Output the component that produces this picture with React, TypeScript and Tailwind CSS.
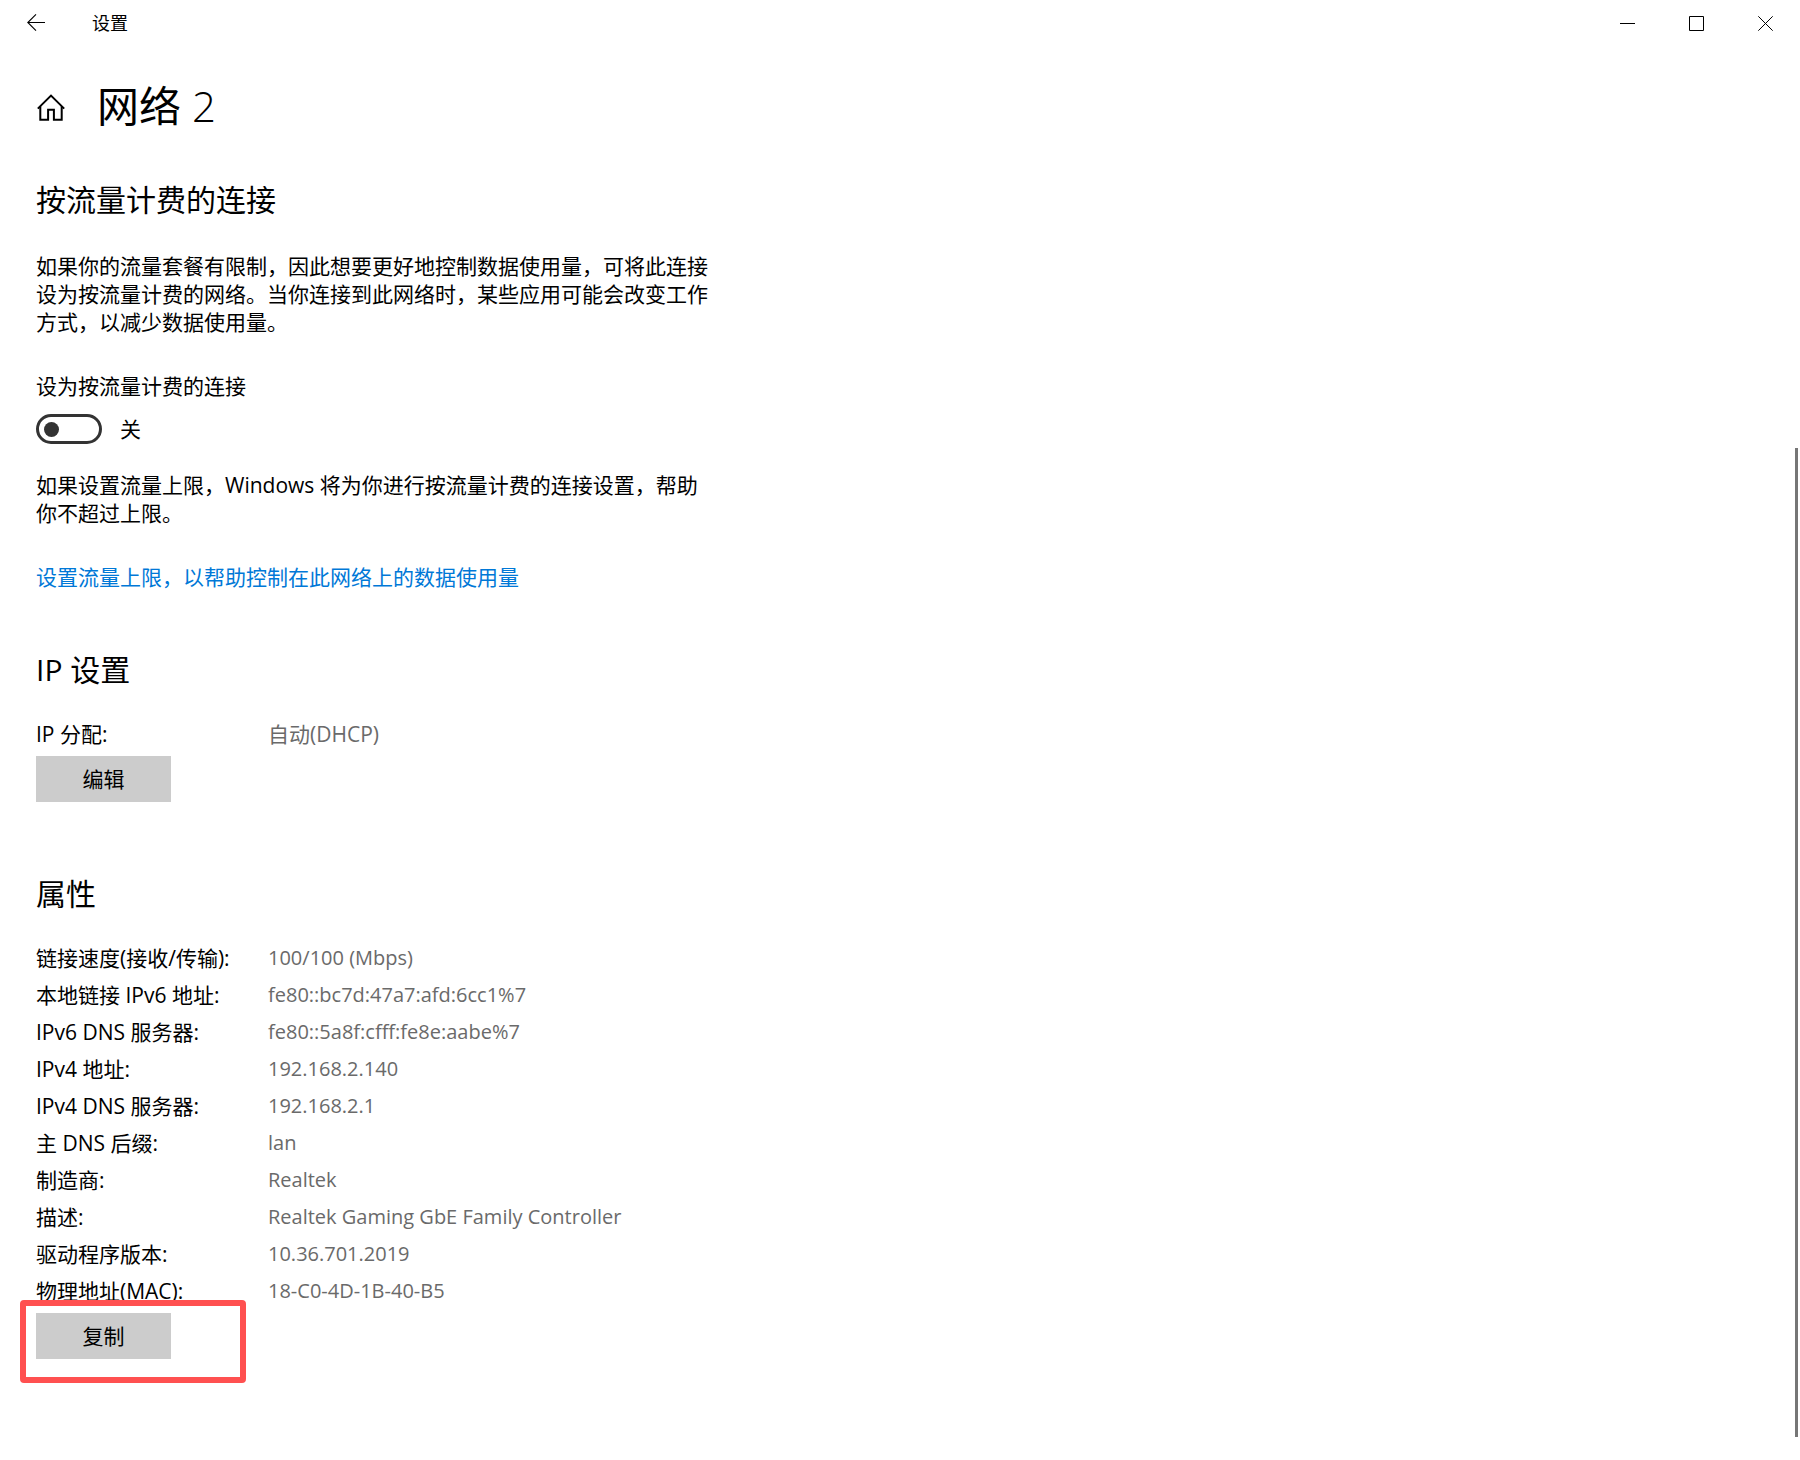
import { useState } from "react";
import type { ReactNode } from "react";

interface PropertyRow {
  label: string;
  value: string;
}

const IP_ROWS: PropertyRow[] = [{ label: "IP 分配:", value: "自动(DHCP)" }];

const PROPERTY_ROWS: PropertyRow[] = [
  { label: "链接速度(接收/传输):", value: "100/100 (Mbps)" },
  { label: "本地链接 IPv6 地址:", value: "fe80::bc7d:47a7:afd:6cc1%7" },
  { label: "IPv6 DNS 服务器:", value: "fe80::5a8f:cfff:fe8e:aabe%7" },
  { label: "IPv4 地址:", value: "192.168.2.140" },
  { label: "IPv4 DNS 服务器:", value: "192.168.2.1" },
  { label: "主 DNS 后缀:", value: "lan" },
  { label: "制造商:", value: "Realtek" },
  { label: "描述:", value: "Realtek Gaming GbE Family Controller" },
  { label: "驱动程序版本:", value: "10.36.701.2019" },
  { label: "物理地址(MAC):", value: "18-C0-4D-1B-40-B5" },
];

function WindowButton({
  label,
  children,
}: {
  label: string;
  children: ReactNode;
}) {
  return (
    <button
      aria-label={label}
      className="flex h-[46px] w-[69px] items-center justify-center hover:bg-gray-200"
      type="button"
    >
      <svg
        className="h-[15px] w-[15px]"
        fill="none"
        stroke="#000"
        strokeWidth="1"
        viewBox="0 0 15 15"
      >
        {children}
      </svg>
    </button>
  );
}

function TitleBar() {
  return (
    <header className="flex h-[46px] items-center">
      <button
        aria-label="返回"
        className="flex h-[46px] w-[72px] items-center justify-center"
        type="button"
      >
        <svg
          className="h-[18px] w-[18px]"
          fill="none"
          stroke="#000"
          strokeWidth="1.1"
          viewBox="0 0 18 18"
        >
          <path d="M18 8.5H.8M9 .4.8 8.5 9 16.7" />
        </svg>
      </button>
      <span className="flex-1 pl-5 text-lg leading-6">设置</span>
      <WindowButton label="最小化">
        <path d="M0 7.5h15" />
      </WindowButton>
      <WindowButton label="最大化">
        <path d="M.5.5h14v14H.5z" />
      </WindowButton>
      <WindowButton label="关闭">
        <path d="M.3.3l14.4 14.4M14.7.3.3 14.7" />
      </WindowButton>
    </header>
  );
}

function HomeIcon() {
  return (
    <svg
      className="h-[31px] w-[29px]"
      fill="none"
      stroke="#000"
      strokeWidth="2"
      viewBox="-1 -3 29 31"
    >
      <path d="M.8 14.6 14 1.6l13.2 13" />
      <path d="M3.3 12.2v13.5h7.8v-9.9h5.8v9.9h7.8V12.2" />
    </svg>
  );
}

function SectionTitle({ children }: { children: ReactNode }) {
  return <h2 className="text-3xl leading-10">{children}</h2>;
}

function ActionButton({ children }: { children: ReactNode }) {
  return (
    <button
      className="block h-[46px] w-[135px] bg-[#ccc] text-[21px] leading-7 hover:bg-[#bbb]"
      type="button"
    >
      {children}
    </button>
  );
}

function PropertyTable({
  rows,
  valueClassName = "",
}: {
  rows: PropertyRow[];
  valueClassName?: string;
}) {
  return (
    <table className="border-collapse text-left">
      <tbody className={valueClassName}>
        {rows.map((row) => (
          <tr className="h-[37px]" key={row.label}>
            <th className="w-[232px] p-0 text-[21px] font-normal" scope="row">
              {row.label}
            </th>
            <td className="p-0 text-[#6a6a6a]">{row.value}</td>
          </tr>
        ))}
      </tbody>
    </table>
  );
}

function MeteredSection() {
  const [metered, setMetered] = useState(false);

  return (
    <section>
      <SectionTitle>按流量计费的连接</SectionTitle>
      <p className="mt-8">
        如果你的流量套餐有限制，因此想要更好地控制数据使用量，可将此连接设为按流量计费的网络。当你连接到此网络时，某些应用可能会改变工作方式，以减少数据使用量。
      </p>
      <label className="mt-9 block" htmlFor="metered">
        设为按流量计费的连接
      </label>
      <div className="mt-3.5 flex items-center gap-[18px]">
        <input
          checked={metered}
          className="flex h-[30px] w-[66px] appearance-none items-center rounded-full border-3 border-[#333] px-[5px] before:h-[15px] before:w-[15px] before:rounded-full before:bg-[#333] checked:justify-end checked:border-[#0078d7] checked:bg-[#0078d7] checked:before:bg-white"
          id="metered"
          onChange={(e) => setMetered(e.target.checked)}
          role="switch"
          type="checkbox"
        />
        <span>{metered ? "开" : "关"}</span>
      </div>
      <p className="mt-[27px]">
        如果设置流量上限，Windows 将为你进行按流量计费的连接设置，帮助你不超过上限。
      </p>
      <a className="mt-9 block text-[#0078d7]" href="#data-limit">
        设置流量上限，以帮助控制在此网络上的数据使用量
      </a>
    </section>
  );
}

export default function App() {
  return (
    <div className="flex min-h-screen flex-col bg-white font-['Open_Sans','Noto_Sans_CJK_SC',sans-serif] text-black">
      <TitleBar />
      <div className="flex flex-1">
        <main className="flex-1 pl-9 text-[21px] leading-7">
          <div className="mt-8 flex items-center gap-8">
            <a aria-label="主页" href="#home">
              <HomeIcon />
            </a>
            <h1 className="text-[42px] leading-[56px]">
              网络 <span className="font-light">2</span>
            </h1>
          </div>
          <div className="mt-[46px] max-w-[680px]">
            <MeteredSection />
            <section className="mt-[59px]">
              <SectionTitle>IP 设置</SectionTitle>
              <div className="mt-[25px]">
                <PropertyTable rows={IP_ROWS} />
              </div>
              <div className="mt-1">
                <ActionButton>编辑</ActionButton>
              </div>
            </section>
            <section className="mt-[72px]">
              <SectionTitle>属性</SectionTitle>
              <div className="mt-[25px]">
                <PropertyTable
                  rows={PROPERTY_ROWS}
                  valueClassName="text-xl leading-7"
                />
              </div>
              <div className="relative mt-1 w-[135px]">
                <ActionButton>复制</ActionButton>
                {/* highlight frame around the copy action */}
                <div className="pointer-events-none absolute -top-[13px] -left-4 h-[83px] w-[226px] rounded-sm border-6 border-[#ff5050]" />
              </div>
            </section>
          </div>
        </main>
        <div className="mt-[402px] mr-0.5 mb-[23px] w-[3px] bg-[#767676]" />
      </div>
    </div>
  );
}
